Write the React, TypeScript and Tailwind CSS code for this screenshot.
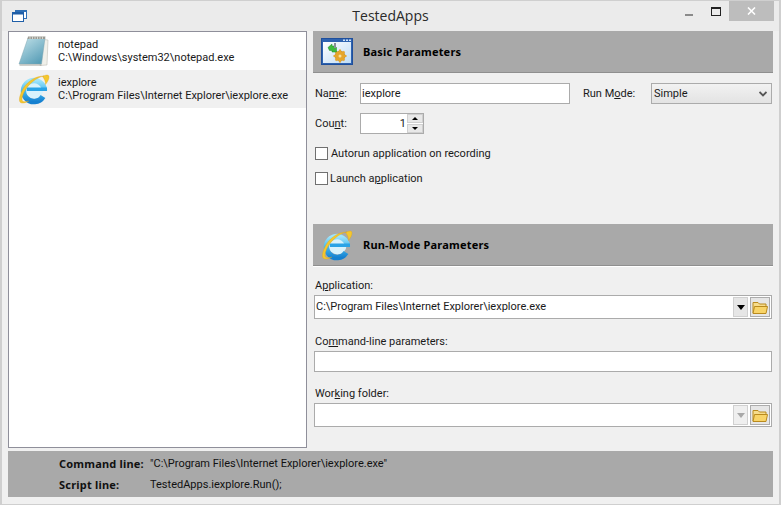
import React from "react";

const FONT = "font-['Roboto','Liberation_Sans',sans-serif]";
const BOLD = "font-['Noto_Sans','Liberation_Sans',sans-serif] font-bold tracking-[0.2px]";

function AppIcon() {
  return (
    <svg width="15" height="13" viewBox="0 0 15 13">
      <rect x="3.5" y="1.5" width="11" height="8" fill="#fff" stroke="#2f6fb5" />
      <rect x="3" y="1" width="12" height="2" fill="#2f6fb5" />
      <rect x="0.5" y="3.5" width="11" height="9" fill="#fff" stroke="#1f5fa8" />
      <rect x="0" y="3" width="12" height="2.5" fill="#1f5fa8" />
    </svg>
  );
}

function IeIcon({ size = 32 }: { size?: number }) {
  return (
    <svg width={size} height={size} viewBox="0 0 32 32">
      <defs>
        <linearGradient id="ieBlue" x1="0" y1="0" x2="0" y2="1">
          <stop offset="0" stopColor="#9fe4fb" />
          <stop offset="0.55" stopColor="#3fb4ec" />
          <stop offset="1" stopColor="#1580d0" />
        </linearGradient>
      </defs>
      <circle cx="16.500" cy="16.500" r="9" fill="#d8f2fc" />
      <path
        d="M26.500 17.500A10.500 10.500 0 1 0 25 23.500"
        fill="none"
        stroke="url(#ieBlue)"
        strokeWidth="5.500"
      />
      <rect x="9" y="14.500" width="20" height="3.500" fill="#2aa3e6" />
      <path
        d="M24.500 3.500C28 1.500 30.800 1.500 31 3.500 31.300 6 29.500 9 27.500 11.500 27.500 8.500 26.500 6 24.500 3.500z"
        fill="#f4c72e"
        stroke="#d99e14"
        strokeWidth="0.3"
      />
      <path
        d="M26 3C18 3 10.500 7.500 5.500 15 2 21 .5 26.500 2 29c1.400 2 5.500 1 9-1-3 .8-5.500 1-6.500 0-1-1.400-.4-5.500 2.500-10.500C11 11 18 4.500 26 3z"
        fill="#f4c72e"
        stroke="#d99e14"
        strokeWidth="0.3"
      />
    </svg>
  );
}

function NotepadIcon() {
  return (
    <svg width="32" height="32" viewBox="0 0 32 32">
      <defs>
        <linearGradient id="padFill" x1="0" y1="0" x2="0.700" y2="1">
          <stop offset="0" stopColor="#c4e3ea" />
          <stop offset="1" stopColor="#5a9fb8" />
        </linearGradient>
      </defs>
      <path d="M26 4.500 30 5l-1 25-7 .5z" fill="#f0f0ea" stroke="#b4b4ac" strokeWidth="0.5" />
      <path d="M10 3h17L23.500 29H1z" fill="url(#padFill)" stroke="#7ea5b0" strokeWidth="0.5" />
      <path d="M10 1.500h17.500l-.5 2.500H9.500z" fill="#9a9a94" />
      <path d="M12 1.500v2.500M14.500 1.500v2.500M17 1.500v2.500M19.500 1.500v2.500M22 1.500v2.500M24.500 1.500v2.500" stroke="#e4e4dc" strokeWidth="0.8" />
      <path d="M1.500 30h22" stroke="#a2a29a" strokeWidth="1" />
    </svg>
  );
}

function ParamsIcon() {
  return (
    <svg width="32" height="27" viewBox="0 0 32 27">
      <defs>
        <linearGradient id="winFill" x1="0" y1="0" x2="1" y2="1">
          <stop offset="0" stopColor="#ffffff" />
          <stop offset="1" stopColor="#bfdcf6" />
        </linearGradient>
      </defs>
      <rect x="0.500" y="0.500" width="31" height="26" fill="#2e63b0" stroke="#1f4f9c" />
      <rect x="2" y="4" width="28" height="21" fill="url(#winFill)" />
      <rect x="22" y="1.500" width="2" height="1.500" fill="#cfe2f8" />
      <rect x="25" y="1.500" width="2" height="1.500" fill="#cfe2f8" />
      <rect x="28" y="1.500" width="2" height="1.500" fill="#cfe2f8" />
      <circle cx="19" cy="18" r="5" fill="#e6a62c" stroke="#b87a14" strokeWidth="0.6" />
      <path d="M19 11.500v13M12.500 18h13M14.500 13.500l9 9M23.500 13.500l-9 9" stroke="#e6a62c" strokeWidth="2" />
      <circle cx="19" cy="18" r="1.500" fill="#f8e0a0" />
      <path d="M7 9.500l4-3.500v2h3l1.500 1.500V14h-4.500v-1.500h-2.500z" fill="#3dbb3d" stroke="#1f8f2a" strokeWidth="0.5" />
      <rect x="13" y="5" width="2" height="5" fill="#8a8f98" />
    </svg>
  );
}

function FolderIcon({ size = 16 }: { size?: number }) {
  return (
    <svg width={size} height={size} viewBox="0 0 16 16">
      <path d="M1 14V3.500h5l1.500 1.500H14V7" fill="#f6dc8c" stroke="#b98a1e" />
      <path d="M1 14.500 2.500 7.500h13L14 14.500z" fill="#f8d468" stroke="#b98a1e" />
    </svg>
  );
}

function Combo({ text, disabled = false }: { text?: string; disabled?: boolean }) {
  return (
    <div className="flex h-6 w-[458px] items-center border border-[#ababab] bg-white px-px text-[#1a1a1a]">
      <span className="flex-1 truncate">{text}</span>
      <div
        className={`flex h-5 w-[15px] items-center justify-center border border-[#d0d0d0] ${
          disabled ? "bg-[#efefef]" : "border-[#b5b5b5] bg-[#e6e6e6]"
        }`}
      >
        <div
          className={`h-0 w-0 border-x-4 border-t-[5px] border-x-transparent ${
            disabled ? "border-t-[#a8a8a8]" : "border-t-black"
          }`}
        />
      </div>
      <div className="ml-[2px] flex h-5 w-5 items-center justify-center border border-[#acacac] bg-[#e6e6e6]">
        <FolderIcon />
      </div>
    </div>
  );
}

function SectionHeader({ icon, title }: { icon: React.ReactNode; title: string }) {
  return (
    <div className="flex h-[42px] items-center border-b border-[#8f8f8f] bg-[#a9a9a9]">
      <div className="ml-2 flex w-[42px] items-center">{icon}</div>
      <span className={`${BOLD} pt-px text-black`}>{title}</span>
    </div>
  );
}

function AppRow({
  icon,
  name,
  path,
  selected = false,
}: {
  icon: React.ReactNode;
  name: string;
  path: string;
  selected?: boolean;
}) {
  return (
    <div className={`flex h-[38px] items-center ${selected ? "bg-[#f0f0f0]" : "bg-white"}`}>
      <div className="ml-[9px] w-10 shrink-0">{icon}</div>
      <div className="leading-[13px] text-[#1a1a1a]">
        <div>{name}</div>
        <div className="whitespace-nowrap">{path}</div>
      </div>
    </div>
  );
}

export default function App() {
  return (
    <div
      className={`${FONT} flex h-[505px] w-[781px] flex-col overflow-hidden border-x-2 border-y border-[#cfcfcf] bg-[#f0f0f0] text-[11px] text-[#1a1a1a]`}
    >
      <div className="flex h-[30px] shrink-0 items-start bg-[#ebebeb]">
        <div className="mt-2 ml-[10px] w-[90px]">
          <AppIcon />
        </div>
        <div className="flex-1 pt-[5px] text-center font-['Open_Sans',sans-serif] text-[14px] leading-5 text-[#2a2a2a]">
          TestedApps
        </div>
        <div className="flex w-[100px] justify-end">
          <div className="mt-[13px] mr-[18px] h-[2px] w-2 bg-[#8a8a8a]" />
          <div className="mt-[6px] mr-[8px] h-[9px] w-[10px] border border-t-[2px] border-[#222]" />
          <div className="mr-[5px] flex h-5 w-[45px] items-center justify-center bg-[#bdbdbd]">
            <svg width="9" height="8" viewBox="0 0 9 8">
              <path d="M1 0.500 8 7.500M8 0.500 1 7.500" stroke="#fff" strokeWidth="1.600" />
            </svg>
          </div>
        </div>
      </div>

      <div className="flex h-[420px] shrink-0 pl-[6px]">
        <div className="h-[417px] w-[299px] shrink-0 border border-[#8f8f9a] bg-white">
          <AppRow icon={<NotepadIcon />} name="notepad" path="C:\Windows\system32\notepad.exe" />
          <AppRow
            icon={<IeIcon />}
            name="iexplore"
            path="C:\Program Files\Internet Explorer\iexplore.exe"
            selected
          />
        </div>

        <div className="ml-[6px] w-[460px] shrink-0">
          <SectionHeader icon={<ParamsIcon />} title="Basic Parameters" />

          <div className="mt-[10px] flex h-[21px] items-center pl-[2px]">
            <span className="w-[45px] pt-px">
              Na<span className="underline">m</span>e:
            </span>
            <div className="flex h-[21px] w-[210px] items-center border border-[#ababab] bg-white pt-px pl-px">
              iexplore
            </div>
            <span className="ml-[13px] w-[68px] pt-px">
              Run M<span className="underline">o</span>de:
            </span>
            <div className="flex h-[21px] w-[121px] items-center justify-between border border-[#ababab] bg-gradient-to-b from-[#f2f2f2] to-[#e3e3e3] pr-[4px] pl-[2px]">
              <span className="pt-[2px]">Simple</span>
              <svg width="8" height="6" viewBox="0 0 8 6">
                <path d="M0.500 1 4 4.500 7.500 1" fill="none" stroke="#555" strokeWidth="1.800" />
              </svg>
            </div>
          </div>

          <div className="mt-[9px] flex h-[21px] items-center pl-[2px]">
            <span className="w-[45px] pt-px">
              Cou<span className="underline">n</span>t:
            </span>
            <div className="flex h-[21px] w-[64px] items-center border border-[#ababab] bg-white">
              <span className="flex-1 pt-px pr-[1px] text-right">1</span>
              <div className="flex h-[19px] w-[16px] flex-col gap-px">
                <div className="flex flex-1 items-center justify-center border border-[#d0d0d0] bg-[#e8e8e8]">
                  <div className="h-0 w-0 border-x-[3px] border-b-[3px] border-x-transparent border-b-black" />
                </div>
                <div className="flex flex-1 items-center justify-center border border-[#d0d0d0] bg-[#e8e8e8]">
                  <div className="h-0 w-0 border-x-[3px] border-t-[3px] border-x-transparent border-t-black" />
                </div>
              </div>
            </div>
          </div>

          <div className="mt-[13px] flex h-[13px] items-center pl-[2px]">
            <div className="h-[13px] w-[13px] border border-[#707070] bg-white" />
            <span className="ml-[3px] pt-px">
              Autorun application on recordin<span className="underline">g</span>
            </span>
          </div>

          <div className="mt-3 flex h-[13px] items-center pl-[2px]">
            <div className="h-[13px] w-[13px] border border-[#707070] bg-white" />
            <span className="ml-[2px] pt-[2px]">
              Launch a<span className="underline">p</span>plication
            </span>
          </div>

          <div className="mt-[39px]">
            <SectionHeader icon={<IeIcon />} title="Run-Mode Parameters" />
          </div>
          <div className="h-px bg-white" />

          <div className="mt-[10px] pl-[2px] leading-[17px]">
            A<span className="underline">p</span>plication:
          </div>
          <div className="mt-[1px] pl-px">
            <Combo text="C:\Program Files\Internet Explorer\iexplore.exe" />
          </div>

          <div className="mt-[14px] pl-[2px] leading-[17px]">
            Co<span className="underline">m</span>mand-line parameters:
          </div>
          <div className="mt-[1px] ml-px h-[21px] w-[458px] border border-[#ababab] bg-white" />

          <div className="mt-[13px] pl-[2px] leading-[17px]">
            Wor<span className="underline">k</span>ing folder:
          </div>
          <div className="mt-[1px] pl-px">
            <Combo disabled />
          </div>
        </div>
      </div>

      <div className="ml-[6px] grid h-[46px] w-[765px] shrink-0 grid-cols-[91px_1fr] content-center gap-y-[7px] bg-[#a9a9a9] pl-[51px] leading-[14px] text-[#111]">
        <span className={BOLD}>Command line:</span>
        <span>"C:\Program Files\Internet Explorer\iexplore.exe"</span>
        <span className={BOLD}>Script line:</span>
        <span>TestedApps.iexplore.Run();</span>
      </div>
    </div>
  );
}
